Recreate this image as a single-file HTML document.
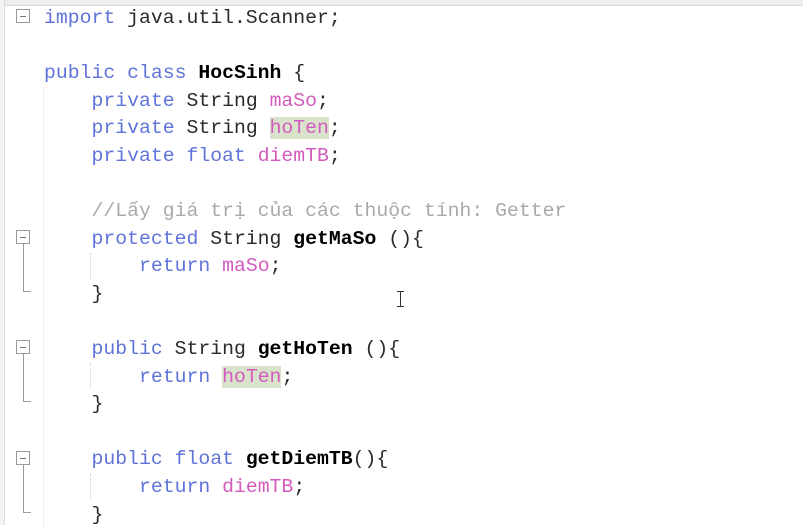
<!DOCTYPE html>
<html><head><meta charset="utf-8">
<style>
html,body{margin:0;padding:0;width:803px;height:525px;overflow:hidden;background:#fff;}
.top{position:absolute;left:0;top:0;width:803px;height:5px;background:#efedef;border-bottom:1px solid #d8d8d8;}
.lg{position:absolute;left:0;top:0;width:4px;height:525px;background:#f3f3f3;border-right:1px solid #dcdcdc;}
.sep{position:absolute;left:43px;top:87px;width:0;height:440px;border-left:1px dotted #e0e0e0;}
.ln{position:absolute;left:44px;height:27.6px;line-height:27.6px;font-family:"Liberation Mono",monospace;font-size:19.8px;color:#2a2a2a;white-space:pre;}
.k{color:#5f73d9}.v{color:#d25bbd}.c{color:#a9a9a9}.b{font-weight:bold;color:#000}
.h{background:#d9e3cc}
.fb{position:absolute;left:16px;width:14px;height:14px;border:1px solid #9a9a9a;background:#fff;box-sizing:border-box;}
.fb:after{content:"";position:absolute;left:3px;top:6px;width:6px;height:1px;background:#777;}
.fl{position:absolute;left:23px;width:7px;border-left:1px solid #9a9a9a;border-bottom:1px solid #9a9a9a;}
.g{position:absolute;left:90px;width:0;border-left:1px dotted #cfcfcf;}
.cur{position:absolute;left:400px;top:291px;width:1px;height:16px;background:#333;}
.cur:before,.cur:after{content:"";position:absolute;left:-3px;width:7px;height:1px;background:#333;}
.cur:before{top:0}.cur:after{bottom:0}
</style></head><body>
<div class="top"></div>
<div class="lg"></div>
<div class="sep"></div>

<div class="fb" style="top:9px"></div>
<div class="fb" style="top:230px"></div><div class="fl" style="top:244px;height:47px"></div>
<div class="fb" style="top:340px"></div><div class="fl" style="top:354px;height:47px"></div>
<div class="fb" style="top:451px"></div><div class="fl" style="top:465px;height:47px"></div>
<div class="g" style="top:253px;height:26px"></div>
<div class="g" style="top:363px;height:26px"></div>
<div class="g" style="top:474px;height:26px"></div>

<div class="ln" style="top:5px"><span class="k">import</span> java.util.Scanner;</div>
<div class="ln" style="top:60px"><span class="k">public class</span> <span class="b">HocSinh</span> {</div>
<div class="ln" style="top:88px">    <span class="k">private</span> String <span class="v">maSo</span>;</div>
<div class="ln" style="top:115px">    <span class="k">private</span> String <span class="v h">hoTen</span>;</div>
<div class="ln" style="top:143px">    <span class="k">private float</span> <span class="v">diemTB</span>;</div>
<div class="ln" style="top:198px">    <span class="c">//Lấy giá trị của các thuộc tính: Getter</span></div>
<div class="ln" style="top:226px">    <span class="k">protected</span> String <span class="b">getMaSo</span> (){</div>
<div class="ln" style="top:253px">        <span class="k">return</span> <span class="v">maSo</span>;</div>
<div class="ln" style="top:281px">    }</div>
<div class="ln" style="top:336px">    <span class="k">public</span> String <span class="b">getHoTen</span> (){</div>
<div class="ln" style="top:364px">        <span class="k">return</span> <span class="v h">hoTen</span>;</div>
<div class="ln" style="top:391px">    }</div>
<div class="ln" style="top:446px">    <span class="k">public float</span> <span class="b">getDiemTB</span>(){</div>
<div class="ln" style="top:474px">        <span class="k">return</span> <span class="v">diemTB</span>;</div>
<div class="ln" style="top:502px">    }</div>
<div class="cur"></div>
</body></html>
